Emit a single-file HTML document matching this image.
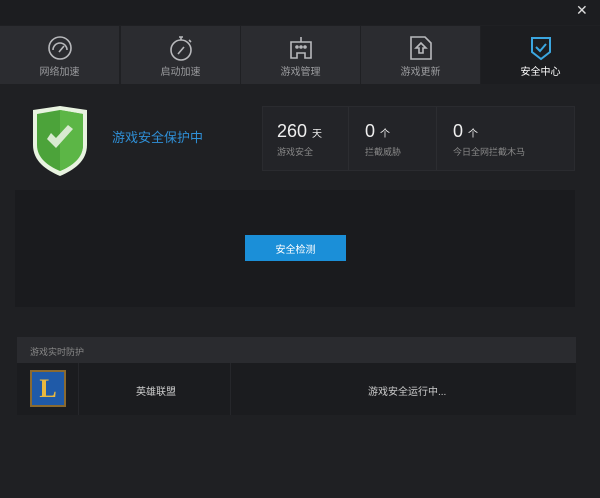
<!DOCTYPE html><html><head><meta charset="utf-8"><style>
*{margin:0;padding:0;box-sizing:border-box}
body{width:600px;height:498px;background:#1f2023;font-family:"Liberation Sans","Noto Sans CJK SC",sans-serif;position:relative;overflow:hidden;color:#aaa}
.a{position:absolute}
.tab{position:absolute;top:26px;height:58px;width:119px;background:#2b2c30;text-align:center;font-size:10px;color:#9a9b9e}
.tab span{position:absolute;left:0;right:0;top:37px}
.tab svg{position:absolute;left:46px;top:8px}
</style></head><body>
<div class="a" style="left:0;top:0;width:600px;height:25px;background:#1c1d20"></div>
<div class="a" style="left:576px;top:2px;color:#ddd;font-size:14px">✕</div>
<div class="tab" style="left:0"><svg width="28" height="28" viewBox="0 0 28 28" fill="none" stroke="#b8b9bc" stroke-width="1.6"><circle cx="14" cy="14" r="11"/><path d="M7 16a7 7 0 0 1 14 0M13 18l5-6"/></svg><span>网络加速</span></div>
<div class="tab" style="left:121px"><svg width="28" height="28" viewBox="0 0 28 28" fill="none" stroke="#b8b9bc" stroke-width="1.6"><circle cx="14" cy="16" r="10"/><path d="M12 3h4M14 3v3M11 20l6-7M22 6l2 2"/></svg><span>启动加速</span></div>
<div class="tab" style="left:241px"><svg width="28" height="28" viewBox="0 0 28 28" fill="none" stroke="#b8b9bc" stroke-width="1.6"><path d="M4 8h20v16h-6v-5h-8v5H4zM14 3v5"/><circle cx="10" cy="13" r="1"/><circle cx="14" cy="13" r="1"/><circle cx="18" cy="13" r="1"/></svg><span>游戏管理</span></div>
<div class="tab" style="left:361px"><svg width="28" height="28" viewBox="0 0 28 28" fill="none" stroke="#b8b9bc" stroke-width="1.6"><path d="M4 3h14l6 6v16H4z"/><path d="M14 9l-5 5h3v5h4v-5h3z"/></svg><span>游戏更新</span></div>
<div class="tab" style="left:481px;width:119px;background:#1c1d20;color:#fff"><svg width="28" height="28" viewBox="0 0 28 28" fill="none" stroke="#3ba6e0" stroke-width="2"><path d="M5 4h18v14l-9 7-9-7z"/><path d="M9 13l4 4 6-7"/></svg><span>安全中心</span></div>
<svg class="a" style="left:30px;top:105px" width="60" height="72" viewBox="0 0 60 72"><path d="M3 5L30 1L57 5V40C57 56 44 65 30 71C16 65 3 56 3 40Z" fill="#e8f3e0"/><path d="M7 9L30 5L53 9V40C53 53 42 61 30 66C18 61 7 53 7 40Z" fill="#4ca33a"/><path d="M30 5L53 9V40C53 53 42 61 30 66Z" fill="#5cb646"/><path d="M17 34l9 9l17-19l-5-4l-12 13l-5-5z" fill="#d8ead0"/></svg>
<div class="a" style="left:112px;top:127px;font-size:13px;color:#2f8fd6">游戏安全保护中</div>
<div class="a" style="left:262px;top:106px;width:313px;height:65px;background:#232428;border:1px solid #2a2b2f"></div>
<div class="a" style="left:348px;top:107px;width:1px;height:63px;background:#2c2d31"></div>
<div class="a" style="left:436px;top:107px;width:1px;height:63px;background:#2c2d31"></div>
<div class="a" style="left:277px;top:121px;font-size:18px;color:#eee">260 <span style="font-size:10px">天</span></div>
<div class="a" style="left:277px;top:145px;font-size:9px;color:#888">游戏安全</div>
<div class="a" style="left:365px;top:121px;font-size:18px;color:#eee">0 <span style="font-size:10px">个</span></div>
<div class="a" style="left:365px;top:145px;font-size:9px;color:#888">拦截威胁</div>
<div class="a" style="left:453px;top:121px;font-size:18px;color:#eee">0 <span style="font-size:10px">个</span></div>
<div class="a" style="left:453px;top:145px;font-size:9px;color:#888">今日全网拦截木马</div>
<div class="a" style="left:15px;top:190px;width:560px;height:117px;background:#1a1b1e"></div>
<div class="a" style="left:245px;top:235px;width:101px;height:26px;background:#1b8fd8;color:#fff;font-size:10px;display:flex;align-items:center;justify-content:center">安全检测</div>
<div class="a" style="left:17px;top:337px;width:559px;height:26px;background:#2a2b2f;font-size:9px;color:#888;padding:8px 0 0 13px">游戏实时防护</div>
<div class="a" style="left:17px;top:363px;width:559px;height:52px;background:#1b1c1f"></div>
<div class="a" style="left:78px;top:363px;width:1px;height:52px;background:#26272b"></div>
<div class="a" style="left:230px;top:363px;width:1px;height:52px;background:#26272b"></div>
<div class="a" style="left:30px;top:370px;width:36px;height:37px;background:#1f5aa8;border:2px solid #8a6a30;color:#e8b840;font:bold 26px 'Liberation Serif',serif;text-align:center;line-height:33px">L</div>
<div class="a" style="left:136px;top:383px;font-size:10px;color:#ccc">英雄联盟</div>
<div class="a" style="left:368px;top:383px;font-size:10px;color:#ccc">游戏安全运行中...</div>
</body></html>
